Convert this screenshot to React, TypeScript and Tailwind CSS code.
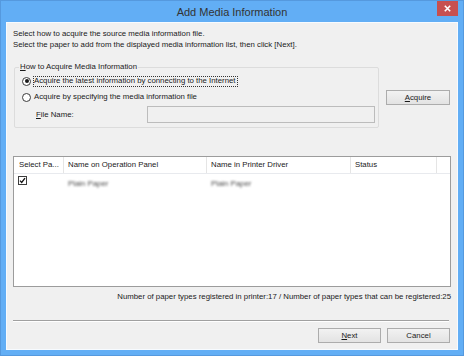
import React from "react";

// =============================================================================
// Small pieces
// =============================================================================

const font = { fontFamily: '"Liberation Sans", Arial, sans-serif' };

function Radio({ checked = false }: { checked?: boolean }) {
  return (
    <span className="w-[9px] h-[9px] rounded-full border border-[#3c3c3c] bg-white flex items-center justify-center shrink-0">
      {checked && <span className="w-[4px] h-[4px] rounded-full bg-[#1a1a1a]" />}
    </span>
  );
}

function Button({ children, className = "" }: { children: React.ReactNode; className?: string }) {
  return (
    <div
      className={`h-[15px] border border-[#acacac] bg-gradient-to-b from-[#f2f2f2] to-[#e3e3e3] flex items-center justify-center text-[7.8px] leading-[10px] text-[#1a1a1a] ${className}`}
    >
      {children}
    </div>
  );
}

function Blurred({ children }: { children: React.ReactNode }) {
  return <span className="inline-block text-[7.8px] leading-[10px] text-[#4a4a4a] blur-[0.8px]">{children}</span>;
}

// =============================================================================
// App
// =============================================================================

export default function App() {
  return (
    <div
      className="w-[464px] h-[356px] bg-[#62aef5] border border-[#5599de] flex flex-col overflow-hidden"
      style={font}
    >
      {/* Title bar */}
      <div className="h-[21px] relative flex items-center justify-center">
        <span className="text-[11px] leading-[14px] text-[#333] mt-[1px]">Add Media Information</span>
        <div className="absolute right-[5px] top-0 w-[21px] h-[15px] bg-[#c75050] flex items-center justify-center">
          <svg width="7" height="7" viewBox="0 0 7 7">
            <path d="M0.8 0.8 L6.2 6.2 M6.2 0.8 L0.8 6.2" stroke="white" strokeWidth="1.6" />
          </svg>
        </div>
      </div>

      {/* Client area */}
      <div className="mx-[5px] mb-[5px] flex-1 bg-[#f0f0f0] border border-[#f7fbff] flex flex-col text-[#1a1a1a]">
        {/* Instructions */}
        <div className="pl-[6px] pt-[6px] text-[7.8px] leading-[10.5px]">
          <div>Select how to acquire the source media information file.</div>
          <div>Select the paper to add from the displayed media information list, then click [Next].</div>
        </div>

        {/* Acquire method */}
        <div className="flex items-start mt-[12px]">
          <fieldset className="ml-[7px] w-[365px] border border-[#dcdcdc] rounded-[2px] pb-[4px]">
            <legend className="ml-[4px] px-[1px] text-[7.8px] leading-[10px]">
              <span className="underline">H</span>ow to Acquire Media Information
            </legend>
            <div className="flex flex-col pt-[4px] gap-[6px]">
              <div className="h-[10px] flex items-center pl-[7px] gap-[2px]">
                <Radio checked />
                <span className="border border-dotted border-[#333] h-[11px] pr-[1px] flex items-center text-[7.8px] leading-[10px]">
                  Acquire the latest information by connecting to the Internet
                </span>
              </div>
              <div className="h-[10px] flex items-center pl-[7px] gap-[3px]">
                <Radio />
                <span className="text-[7.8px] leading-[10px]">Acquire by specifying the media information file</span>
              </div>
              <div className="flex items-center mt-[-2px]">
                <span className="ml-[21px] w-[111px] text-[7.8px] leading-[10px]">
                  <span className="underline">F</span>ile Name:
                </span>
                <div className="w-[228px] h-[17px] border border-[#bcbcbc] bg-[#f0f0f0]" />
              </div>
            </div>
          </fieldset>
          <Button className="ml-[7px] mt-[28px] w-[64px]">
            <span className="underline">A</span>cquire
          </Button>
        </div>

        {/* Media list */}
        <div className="ml-[6px] mt-[28px] w-[438px] h-[131px] border border-[#9c9c9c] bg-white flex flex-col">
          <div className="h-[17px] flex border-b border-[#e8eaee] text-[7.8px] leading-[10px]">
            <div className="w-[50px] pl-[5px] flex items-center border-r border-[#e5e5e5] whitespace-nowrap overflow-hidden">Select Pa...</div>
            <div className="w-[143px] pl-[4px] flex items-center border-r border-[#e5e5e5]">Name on Operation Panel</div>
            <div className="w-[144px] pl-[4px] flex items-center border-r border-[#e5e5e5]">Name in Printer Driver</div>
            <div className="w-[86px] pl-[4px] flex items-center border-r border-[#e5e5e5]">Status</div>
            <div className="flex-1" />
          </div>
          <div className="flex h-[13px] items-center">
            <div className="w-[50px] pl-[4px] flex items-center">
              <span className="w-[9px] h-[9px] border border-[#3c3c3c] bg-white flex items-center justify-center">
                <svg width="7" height="7" viewBox="0 0 7 7">
                  <path d="M1 3.6 L2.7 5.4 L6 1.2" stroke="#111" strokeWidth="1.3" fill="none" />
                </svg>
              </span>
            </div>
            <div className="w-[143px] pl-[4px]">
              <Blurred>Plain Paper</Blurred>
            </div>
            <div className="w-[144px] pl-[4px]">
              <Blurred>Plain Paper</Blurred>
            </div>
          </div>
        </div>

        {/* Counts */}
        <div className="mt-[5px] pr-[6px] text-right text-[7.8px] leading-[10px] whitespace-nowrap">
          Number of paper types registered in printer:17 / Number of paper types that can be registered:25
        </div>

        {/* Separator */}
        <div className="mt-[18px] ml-[6px] mr-[8px] border-t border-[#a0a0a0] border-b border-b-white" />

        {/* Buttons */}
        <div className="mt-[6px] flex justify-end gap-[6px] pr-[7px]">
          <Button className="w-[63px]">
            <span className="underline">N</span>ext
          </Button>
          <Button className="w-[63px]">Cancel</Button>
        </div>
      </div>
    </div>
  );
}
